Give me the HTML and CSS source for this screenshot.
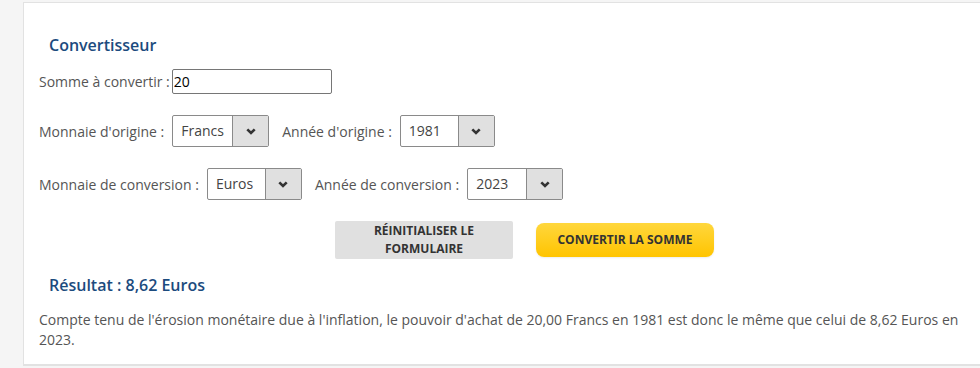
FILE: index.html
```html
<!DOCTYPE html>
<html lang="fr">
<head>
    <meta charset="UTF-8">
    <meta name="viewport" content="width=device-width, initial-scale=1.0">
    <title>Convertisseur</title>
    <link rel="stylesheet" href="styles.css">
</head>
<body>
    <div class="panel">
        <h2 class="title">Convertisseur</h2>

        <div class="row row-first">
            <label class="label" for="somme">Somme à convertir :</label>
            <input class="amount" id="somme" type="text" value="20">
        </div>

        <div class="row">
            <label class="label">Monnaie d'origine :</label>
            <div class="select" style="--w: 59px">
                <span class="select-value">Francs</span>
                <span class="select-arrow"><svg width="10" height="7" viewBox="0 0 10 7"><path d="M1.3 1.3 L5 5 L8.7 1.3" fill="none" stroke="#333" stroke-width="2.6"/></svg></span>
            </div>
            <label class="label label-next">Année d'origine :</label>
            <div class="select" style="--w: 57px">
                <span class="select-value">1981</span>
                <span class="select-arrow"><svg width="10" height="7" viewBox="0 0 10 7"><path d="M1.3 1.3 L5 5 L8.7 1.3" fill="none" stroke="#333" stroke-width="2.6"/></svg></span>
            </div>
        </div>

        <div class="row">
            <label class="label">Monnaie de conversion :</label>
            <div class="select" style="--w: 57px">
                <span class="select-value">Euros</span>
                <span class="select-arrow"><svg width="10" height="7" viewBox="0 0 10 7"><path d="M1.3 1.3 L5 5 L8.7 1.3" fill="none" stroke="#333" stroke-width="2.6"/></svg></span>
            </div>
            <label class="label label-next">Année de conversion :</label>
            <div class="select" style="--w: 58px">
                <span class="select-value">2023</span>
                <span class="select-arrow"><svg width="10" height="7" viewBox="0 0 10 7"><path d="M1.3 1.3 L5 5 L8.7 1.3" fill="none" stroke="#333" stroke-width="2.6"/></svg></span>
            </div>
        </div>

        <div class="buttons">
            <button class="btn btn-reset">Réinitialiser le<br>formulaire</button>
            <button class="btn btn-convert">Convertir la somme</button>
        </div>

        <h2 class="title result">Résultat : 8,62 Euros</h2>
        <p class="text">Compte tenu de l'érosion monétaire due à l'inflation, le pouvoir d'achat de 20,00 Francs en 1981 est donc le même que celui de 8,62 Euros en 2023.</p>
    </div>
</body>
</html>
```

FILE: styles.css
```css
html, body {
    margin: 0;
    padding: 0;
}
body {
    background: #f5f5f5;
    font-family: "Open Sans", "Liberation Sans", sans-serif;
    font-size: 14px;
    color: #555;
    overflow: hidden;
}

.panel {
    margin: 2px 0 0 23px;
    width: 935px;
    padding: 0 16px 14px 15px;
    background: #fff;
    border: 1px solid #e2e2e2;
    border-width: 1px 0 2px 1px;
}

.title {
    margin: 31px 0 0 10px;
    font-size: 16px;
    line-height: 22px;
    font-weight: 600;
    color: #1c4b7e;
}

.row {
    display: flex;
    align-items: center;
    height: 32px;
    margin-top: 21px;
}
.row-first {
    height: 25px;
    margin-top: 13px;
}
.row-first .label {
    margin-right: 2px;
}

.label {
    margin-right: 8px;
}
.label-next {
    margin-left: 13px;
}

.amount {
    box-sizing: border-box;
    width: 160px;
    height: 25px;
    margin: 0;
    padding: 0 1px;
    border: 1px solid #767676;
    border-radius: 2px;
    font-family: inherit;
    font-size: 14px;
    color: #000;
}

.select {
    display: flex;
    height: 32px;
    box-sizing: border-box;
    border: 1px solid #8a8a8a;
    border-radius: 2px;
    color: #444;
}
.select-value {
    width: var(--w);
    padding-left: 8px;
    box-sizing: border-box;
    line-height: 30px;
}
.select-arrow {
    width: 35px;
    display: flex;
    align-items: center;
    justify-content: center;
    background: #e0e0e0;
    border-left: 1px solid #8a8a8a;
}

.buttons {
    display: flex;
    align-items: center;
    gap: 23px;
    margin: 21px 0 0 296px;
}
.btn {
    width: 178px;
    border: none;
    font-family: inherit;
    font-size: 12px;
    font-weight: 700;
    line-height: 18px;
    text-transform: uppercase;
    color: #333;
    padding: 0;
}
.btn-reset {
    height: 38px;
    background: #e0e0e0;
    border-radius: 2px;
}
.btn-convert {
    height: 34px;
    border-radius: 8px;
    background: linear-gradient(#ffd73d, #ffc400);
    box-shadow: 0 1px 2px rgba(0, 0, 0, 0.08);
}

.result {
    margin-top: 15px;
}

.text {
    margin: 14px 0 0;
    line-height: 20px;
}
```
